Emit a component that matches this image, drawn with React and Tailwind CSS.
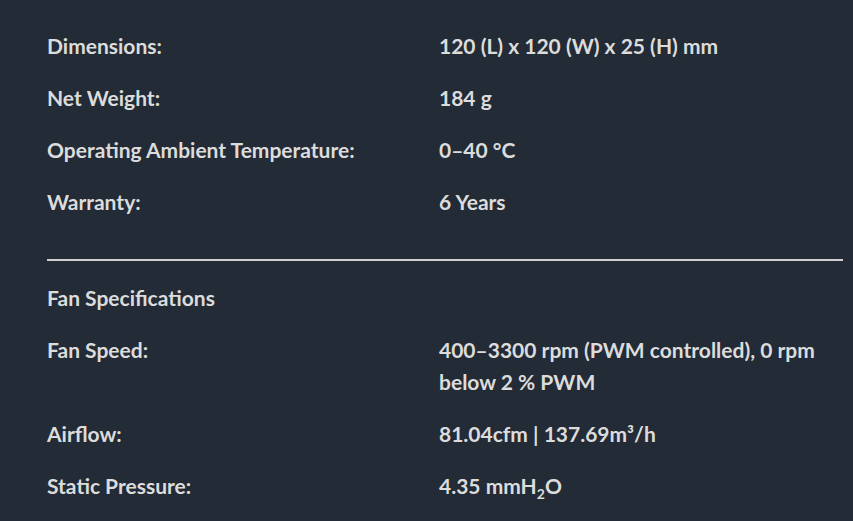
import React from "react";

const rows1 = [
  ["Dimensions:", "120 (L) x 120 (W) x 25 (H) mm"],
  ["Net Weight:", "184 g"],
  ["Operating Ambient Temperature:", "0–40 °C"],
  ["Warranty:", "6 Years"],
];

function Row({ label, children }) {
  return (
    <div className="grid grid-cols-[392px_1fr] py-[10px]">
      <div>{label}</div>
      <div>{children}</div>
    </div>
  );
}

export default function App() {
  return (
    <div
      className="min-h-[521px] w-full bg-[#232b36] text-[#dcdcdc] font-bold text-[21px] leading-[32px]"
      style={{ fontFamily: "Lato, 'Liberation Sans', sans-serif" }}
    >
      <div className="ml-[47px] w-[796px] pt-[20px]">
        {rows1.map(([l, v]) => (
          <Row key={l} label={l}>{v}</Row>
        ))}
        <div className="mt-[31px] h-[2px] bg-[#cfcfcf]" />
        <div className="pt-[21px] pb-[10px]">Fan Specifications</div>
        <Row label="Fan Speed:">
          400–3300 rpm (PWM controlled), 0 rpm below 2 % PWM
        </Row>
        <Row label="Airflow:">
          81.04cfm | 137.69m³/h
        </Row>
        <Row label="Static Pressure:">
          4.35 mmH<sub className="text-[14px] align-baseline relative top-[5px]">2</sub>O
        </Row>
      </div>
    </div>
  );
}
